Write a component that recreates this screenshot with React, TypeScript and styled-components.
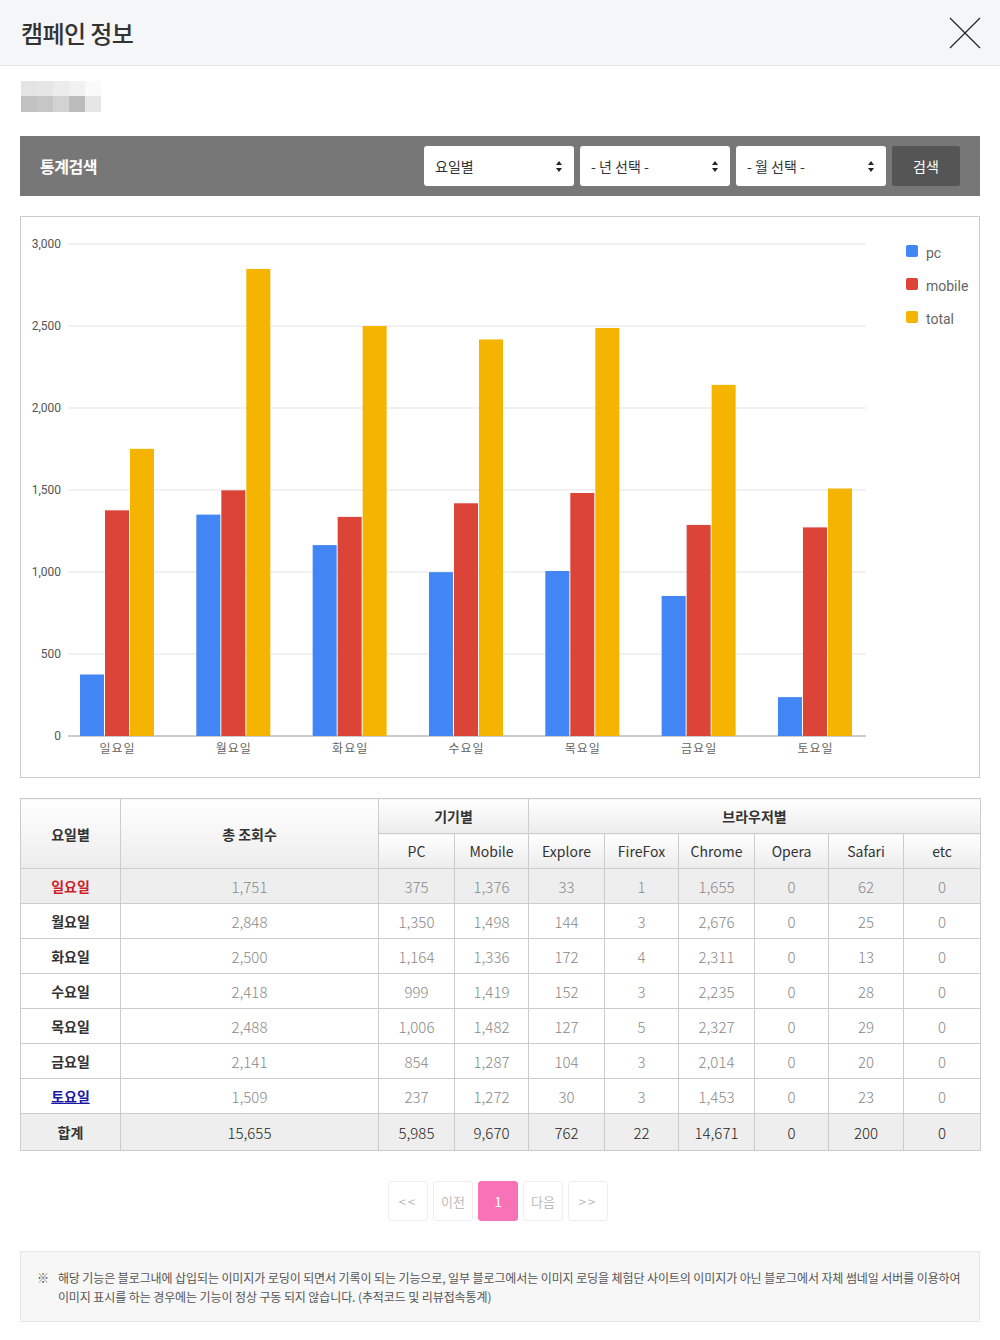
import styled, { createGlobalStyle } from "styled-components";

const GlobalStyle = createGlobalStyle`
  html, body {
    margin: 0;
    padding: 0;
    background: #fff;
    font-family: "Noto Sans CJK KR", "Noto Sans", sans-serif;
    color: #333;
  }
`;

const Page = styled.div`
  width: 1000px;
`;

const Header = styled.header`
  height: 66px;
  background: #f5f6f8;
  border-bottom: 1px solid #e6e6e6;
  display: flex;
  align-items: center;
  justify-content: space-between;
  padding: 0 19px 0 21px;
  box-sizing: border-box;
`;

const Title = styled.h1`
  margin: 0;
  font-size: 24px;
  font-weight: 500;
  color: #333;
  letter-spacing: -0.6px;
`;

const CloseButton = styled.button`
  border: 0;
  background: none;
  padding: 0;
  width: 32px;
  height: 32px;
  display: flex;
  cursor: pointer;
`;

const Body = styled.div`
  padding: 15px 20px 20px;
  display: flex;
  flex-direction: column;
`;

const Thumb = styled.div`
  width: 80px;
  height: 31px;
  display: grid;
  grid-template-columns: 16px 16px 16px 16px 16px;
  grid-template-rows: 15px 16px;
  margin-left: 1px;
`;

const ThumbCell = styled.div<{ $c: string }>`
  background: ${(p) => p.$c};
`;

const SearchBar = styled.div`
  margin-top: 24px;
  height: 60px;
  background: #777;
  display: flex;
  align-items: center;
  padding: 0 20px;
  gap: 6px;
`;

const SearchTitle = styled.div`
  flex: 1;
  color: #fff;
  font-size: 16px;
  font-weight: 700;
  letter-spacing: -0.5px;
`;

const Select = styled.div`
  width: 150px;
  height: 40px;
  box-sizing: border-box;
  background: #fff;
  border-radius: 3px;
  display: flex;
  align-items: center;
  justify-content: space-between;
  padding: 0 12px 0 11px;
  font-size: 14px;
  color: #333;
`;

const SearchButton = styled.button`
  width: 68px;
  height: 40px;
  border: 0;
  background: #555;
  color: #fff;
  font-family: inherit;
  font-size: 14px;
  border-radius: 2px;
`;

const ChartBox = styled.div`
  margin-top: 20px;
  height: 562px;
  border: 1px solid #ccc;
  box-sizing: border-box;
  & svg {
    display: block;
  }
`;

const Table = styled.table`
  margin-top: 20px;
  width: 960px;
  border-collapse: collapse;
  table-layout: fixed;
  font-size: 14px;

  & th,
  & td {
    border: 1px solid #ccc;
    text-align: center;
    padding: 0;
  }
  & th {
    height: 34px;
    font-weight: 700;
    color: #333;
    background: linear-gradient(#fff, #ececec);
  }
  & th.sub {
    font-weight: 400;
  }
`;

const Row = styled.tr<{ $shade?: boolean; $total?: boolean }>`
  background: ${(p) => (p.$shade || p.$total ? "#eee" : "#fff")};
  & td {
    height: ${(p) => (p.$total ? "36px" : "34px")};
    color: ${(p) => (p.$total ? "#222" : "#888")};
    font-size: 15px;
    font-weight: 300;
  }
  & td:first-child {
    font-size: 14px;
    font-weight: 700;
    color: #333;
  }
`;

const DayLabel = styled.span<{ $tone?: "sun" | "sat" }>`
  color: ${(p) => (p.$tone === "sun" ? "#cc1f2a" : p.$tone === "sat" ? "#1a1aa6" : "#333")};
  text-decoration: ${(p) => (p.$tone === "sat" ? "underline" : "none")};
`;

const Pager = styled.div`
  margin-top: 30px;
  display: flex;
  justify-content: center;
  gap: 5px;
  padding-right: 4px;
`;

const PageBtn = styled.div<{ $active?: boolean; $arrow?: boolean }>`
  width: 40px;
  height: 40px;
  box-sizing: border-box;
  border: 1px solid ${(p) => (p.$active ? "#f772b6" : "#eee")};
  background: ${(p) => (p.$active ? "#f772b6" : "#fff")};
  color: ${(p) => (p.$active ? "#fff" : "#bbb")};
  border-radius: 3px;
  display: flex;
  align-items: center;
  justify-content: center;
  font-size: 13px;
  letter-spacing: ${(p) => (p.$arrow ? "2px" : "0")};
`;

const Notice = styled.div`
  margin-top: 30px;
  background: #f7f7f7;
  border: 1px solid #e6e6e6;
  padding: 16px 14px 15px 16px;
  display: flex;
  gap: 9px;
  font-size: 12px;
  line-height: 19px;
  color: #555;
  letter-spacing: -0.1px;
`;

const data = [
  { day: "일요일", pc: 375, mo: 1376, tot: 1751, ex: 33, ff: 1, ch: 1655, op: 0, sa: 62, etc: 0 },
  { day: "월요일", pc: 1350, mo: 1498, tot: 2848, ex: 144, ff: 3, ch: 2676, op: 0, sa: 25, etc: 0 },
  { day: "화요일", pc: 1164, mo: 1336, tot: 2500, ex: 172, ff: 4, ch: 2311, op: 0, sa: 13, etc: 0 },
  { day: "수요일", pc: 999, mo: 1419, tot: 2418, ex: 152, ff: 3, ch: 2235, op: 0, sa: 28, etc: 0 },
  { day: "목요일", pc: 1006, mo: 1482, tot: 2488, ex: 127, ff: 5, ch: 2327, op: 0, sa: 29, etc: 0 },
  { day: "금요일", pc: 854, mo: 1287, tot: 2141, ex: 104, ff: 3, ch: 2014, op: 0, sa: 20, etc: 0 },
  { day: "토요일", pc: 237, mo: 1272, tot: 1509, ex: 30, ff: 3, ch: 1453, op: 0, sa: 23, etc: 0 },
];

const fmt = (n: number) => n.toLocaleString("en-US");

const COLORS = { pc: "#4285f4", mo: "#db4437", tot: "#f4b400" };

function Arrows() {
  return (
    <svg width="6" height="11" viewBox="0 0 6 11">
      <path d="M3 0 L6 4 L0 4 Z M3 11 L6 7 L0 7 Z" fill="#222" />
    </svg>
  );
}

function Chart() {
  const base = 519;
  const scale = 0.164;
  const ticks = [0, 500, 1000, 1500, 2000, 2500, 3000];
  return (
    <svg width="958" height="560" viewBox="0 0 958 560">
      {ticks.map((t) => {
        const y = base - t * scale;
        return (
          <g key={t}>
            <line x1="47" x2="845" y1={y} y2={y} stroke={t === 0 ? "#999" : "#e3e3e3"} strokeWidth="1" />
            <text x="40" y={y + 4} textAnchor="end" fontSize="12" fill="#555" fontFamily="Roboto, sans-serif">
              {fmt(t)}
            </text>
          </g>
        );
      })}
      {data.map((d, i) => {
        const cx = 96.5 + 116.33 * i;
        const bars = [
          { v: d.pc, c: COLORS.pc, x: cx - 37.5 },
          { v: d.mo, c: COLORS.mo, x: cx - 12.5 },
          { v: d.tot, c: COLORS.tot, x: cx + 12.5 },
        ];
        return (
          <g key={d.day}>
            {bars.map((b) => (
              <rect key={b.c} x={b.x} y={base - b.v * scale} width="24" height={b.v * scale} fill={b.c} />
            ))}
            <text x={cx} y="536" textAnchor="middle" fontSize="12" fill="#666" letterSpacing="1">
              {d.day}
            </text>
          </g>
        );
      })}
      {[
        { c: COLORS.pc, t: "pc" },
        { c: COLORS.mo, t: "mobile" },
        { c: COLORS.tot, t: "total" },
      ].map((l, i) => (
        <g key={l.t}>
          <rect x="885" y={28 + i * 33} width="12" height="12" rx="2" fill={l.c} />
          <text x="905" y={41 + i * 33} fontSize="14" fill="#666" fontFamily="Roboto, sans-serif">
            {l.t}
          </text>
        </g>
      ))}
    </svg>
  );
}

const thumbColors = [
  ["#e4e4e4", "#e6e6e6", "#ececec", "#f1f1f1", "#fafafa"],
  ["#c2c2c2", "#c6c6c6", "#d2d2d2", "#bcbcbc", "#e6e6e6"],
];

export default function App() {
  const sum = (k: keyof (typeof data)[number]) =>
    data.reduce((a, d) => a + (d[k] as number), 0);
  return (
    <Page>
      <GlobalStyle />
      <Header>
        <Title>캠페인 정보</Title>
        <CloseButton aria-label="닫기">
          <svg width="32" height="32" viewBox="0 0 32 32">
            <path d="M1 1 L31 31 M31 1 L1 31" stroke="#222" strokeWidth="1.2" />
          </svg>
        </CloseButton>
      </Header>
      <Body>
        <Thumb>
          {thumbColors.flat().map((c, i) => (
            <ThumbCell key={i} $c={c} />
          ))}
        </Thumb>
        <SearchBar>
          <SearchTitle>통계검색</SearchTitle>
          <Select>
            요일별 <Arrows />
          </Select>
          <Select>
            - 년 선택 - <Arrows />
          </Select>
          <Select>
            - 월 선택 - <Arrows />
          </Select>
          <SearchButton>검색</SearchButton>
        </SearchBar>
        <ChartBox>
          <Chart />
        </ChartBox>
        <Table>
          <colgroup>
            <col style={{ width: 100 }} />
            <col style={{ width: 258 }} />
            <col style={{ width: 76 }} />
            <col style={{ width: 74 }} />
            <col style={{ width: 76 }} />
            <col style={{ width: 74 }} />
            <col style={{ width: 76 }} />
            <col style={{ width: 74 }} />
            <col style={{ width: 75 }} />
            <col style={{ width: 77 }} />
          </colgroup>
          <thead>
            <tr>
              <th rowSpan={2}>요일별</th>
              <th rowSpan={2}>총 조회수</th>
              <th colSpan={2}>기기별</th>
              <th colSpan={6}>브라우저별</th>
            </tr>
            <tr>
              <th className="sub">PC</th>
              <th className="sub">Mobile</th>
              <th className="sub">Explore</th>
              <th className="sub">FireFox</th>
              <th className="sub">Chrome</th>
              <th className="sub">Opera</th>
              <th className="sub">Safari</th>
              <th className="sub">etc</th>
            </tr>
          </thead>
          <tbody>
            {data.map((d, i) => (
              <Row key={d.day} $shade={i === 0}>
                <td>
                  <DayLabel $tone={i === 0 ? "sun" : i === 6 ? "sat" : undefined}>{d.day}</DayLabel>
                </td>
                <td>{fmt(d.tot)}</td>
                <td>{fmt(d.pc)}</td>
                <td>{fmt(d.mo)}</td>
                <td>{fmt(d.ex)}</td>
                <td>{fmt(d.ff)}</td>
                <td>{fmt(d.ch)}</td>
                <td>{fmt(d.op)}</td>
                <td>{fmt(d.sa)}</td>
                <td>{fmt(d.etc)}</td>
              </Row>
            ))}
            <Row $total>
              <td>합계</td>
              <td>{fmt(sum("tot"))}</td>
              <td>{fmt(sum("pc"))}</td>
              <td>{fmt(sum("mo"))}</td>
              <td>{fmt(sum("ex"))}</td>
              <td>{fmt(sum("ff"))}</td>
              <td>{fmt(sum("ch"))}</td>
              <td>{fmt(sum("op"))}</td>
              <td>{fmt(sum("sa"))}</td>
              <td>{fmt(sum("etc"))}</td>
            </Row>
          </tbody>
        </Table>
        <Pager>
          <PageBtn $arrow>&lt;&lt;</PageBtn>
          <PageBtn>이전</PageBtn>
          <PageBtn $active>1</PageBtn>
          <PageBtn>다음</PageBtn>
          <PageBtn $arrow>&gt;&gt;</PageBtn>
        </Pager>
        <Notice>
          <span>※</span>
          <span>
            해당 기능은 블로그내에 삽입되는 이미지가 로딩이 되면서 기록이 되는 기능으로, 일부 블로그에서는 이미지 로딩을 체험단 사이트의 이미지가 아닌 블로그에서 자체 썸네일 서버를 이용하여 이미지 표시를 하는 경우에는 기능이 정상 구동 되지 않습니다. (추적코드 및 리뷰접속통계)
          </span>
        </Notice>
      </Body>
    </Page>
  );
}
